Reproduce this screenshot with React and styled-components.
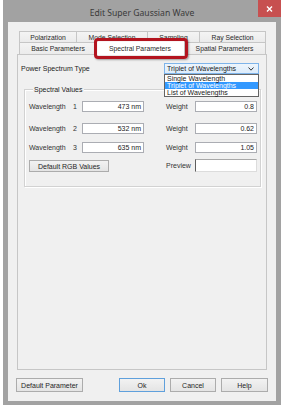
import React from 'react';
import styled, { createGlobalStyle } from 'styled-components';

const GlobalStyle = createGlobalStyle`
  html, body { margin: 0; padding: 0; background: #ffffff; }
  body { font-family: "Liberation Sans", Arial, sans-serif; color: #222; }
  * { box-sizing: border-box; }
`;

const Page = styled.div`
  width: 285px;
  height: 410px;
  padding-left: 3px;
`;

const Window = styled.div`
  width: 278px;
  height: 405px;
  background: #a2a2a2;
  padding: 0 5px 4px 5px;
  display: flex;
  flex-direction: column;
`;

const TitleBar = styled.div`
  height: 22px;
  margin: 0 -5px;
  display: grid;
  grid-template-columns: 23px 1fr 23px;
  align-items: start;
`;

const Title = styled.div`
  grid-column: 2;
  text-align: center;
  padding-top: 8px;
  font-family: "Noto Sans", "Liberation Sans", sans-serif;
  font-size: 8.6px;
  line-height: 10px;
  color: #3a3a3a;
`;

const CloseButton = styled.div`
  grid-column: 3;
  height: 17px;
  background: #c75050;
  display: flex;
  align-items: center;
  justify-content: center;
`;

const Client = styled.div`
  flex: 1;
  background: #f0f0f0;
  padding: 9px 9px 9px 9px;
  display: flex;
  flex-direction: column;
`;

const TabStrip = styled.div`
  position: relative;
  z-index: 1;
  padding: 0 1px 0 2px;
  display: flex;
  flex-direction: column;
`;

const TabRow = styled.div`
  display: flex;
  height: ${p => p.$h}px;
`;

const Tab = styled.div`
  flex: none;
  width: ${p => p.$w}px;
  height: 100%;
  border: 1px solid #c6c6c6;
  border-bottom: none;
  background: linear-gradient(#f4f4f4, #ebebeb);
  font-size: 6.8px;
  display: flex;
  align-items: center;
  justify-content: center;
  white-space: nowrap;
  color: #2a2a2a;
  & + & { border-left: none; }
`;

const ActiveTab = styled.div`
  flex: none;
  position: relative;
  width: ${p => p.$w + 4}px;
  height: 15px;
  margin: -2px -2px 0 -2px;
  border: 1px solid #c6c6c6;
  border-bottom: none;
  background: #ffffff;
  font-size: 6.8px;
  display: flex;
  align-items: center;
  justify-content: center;
  white-space: nowrap;
  color: #2a2a2a;
  z-index: 2;
  &::after {
    content: "";
    position: absolute;
    left: -2px;
    right: -4px;
    top: -3px;
    bottom: -4px;
    border: 3px solid #b3141f;
    border-radius: 4px;
    box-shadow: 1px 1px 2px rgba(0, 0, 0, 0.35), inset 0 0 1px rgba(120, 0, 0, 0.4);
  }
`;

const Panel = styled.div`
  height: 316px;
  border: 1px solid #c6c6c6;
  background: #f0f0f0;
  padding-top: 8px;
  display: flex;
  flex-direction: column;
`;

const HeaderRow = styled.div`
  height: 11px;
  padding: 0 7px 0 3px;
  display: flex;
  align-items: center;
  justify-content: space-between;
  font-size: 7px;
`;

const Combo = styled.div`
  position: relative;
  width: 95px;
  height: 11px;
  border: 1px solid #7eb4ea;
  background: linear-gradient(#edf5fc, #dcecfc);
  padding: 0 4px 0 2px;
  display: flex;
  align-items: center;
  justify-content: space-between;
  font-size: 7px;
  color: #1a1a1a;
`;

const DropList = styled.div`
  position: absolute;
  left: -1px;
  top: calc(100% + 1px);
  width: 95px;
  border: 1px solid #646464;
  background: #ffffff;
  z-index: 5;
`;

const DropItem = styled.div`
  height: 7px;
  line-height: 7px;
  padding-left: 2px;
  font-size: 7px;
  white-space: nowrap;
  background: ${p => (p.$selected ? '#3399ff' : '#ffffff')};
  color: ${p => (p.$selected ? '#ffffff' : '#1a1a1a')};
`;

const GroupBox = styled.div`
  margin: 15px 5px 0 6px;
  border: 1px solid #d2d2d2;
  box-shadow: 1px 1px 0 #ffffff, inset 1px 1px 0 #ffffff;
  padding: 0 0 14px 4px;
`;

const Legend = styled.div`
  width: fit-content;
  margin: -5px 0 0 4px;
  padding: 0 1px;
  height: 9px;
  line-height: 9px;
  font-size: 7px;
  background: #f0f0f0;
`;

const FieldRow = styled.div`
  display: grid;
  grid-template-columns: 44px 9px 62px 22px 29px 62px;
  align-items: center;
  height: ${p => p.$h || 11}px;
  margin-top: ${p => p.$top}px;
  font-size: 7px;
  color: #333;
`;

const Label = styled.span`
  grid-column: ${p => p.$col};
  white-space: nowrap;
`;

const TextBox = styled.div`
  grid-column: ${p => p.$col};
  height: 11px;
  border: 1px solid #abadb3;
  background: #ffffff;
  text-align: right;
  padding-right: 2px;
  line-height: 9px;
  font-size: 7px;
  color: #1a1a1a;
`;

const PreviewBox = styled.div`
  grid-column: 6;
  height: 13px;
  background: #ffffff;
  border: 1px solid #dcdcdc;
  border-left-color: #5f5f5f;
  border-top-color: #a8a8a8;
`;

const Button = styled.div`
  width: ${p => p.$w}px;
  height: ${p => p.$h || 14}px;
  border: 1px solid ${p => (p.$default ? '#5fa0dc' : '#acacac')};
  background: linear-gradient(#f2f2f2, #e4e4e4);
  font-size: 7px;
  color: #1f1f1f;
  display: flex;
  align-items: center;
  justify-content: center;
  white-space: nowrap;
`;

const RgbButton = styled(Button)`
  grid-column: 1 / 4;
  align-self: end;
`;

const ButtonRow = styled.div`
  margin: 8px -1px 0 -1px;
  height: 14px;
  display: flex;
  gap: 5px;
`;

const Spacer = styled.div`
  flex: 1;
`;

const rows = [
  { n: 1, wl: '473 nm', w: '0.8', top: 7 },
  { n: 2, wl: '532 nm', w: '0.62', top: 11 },
  { n: 3, wl: '635 nm', w: '1.05', top: 8 },
];

export default function App() {
  return (
    <>
      <GlobalStyle />
      <Page>
        <Window>
          <TitleBar>
            <Title>Edit Super Gaussian Wave</Title>
            <CloseButton>
              <svg width="7" height="6" viewBox="0 0 7 6">
                <path d="M1 0.5 L6 5.5 M6 0.5 L1 5.5" stroke="#ffffff" strokeWidth="1.4" />
              </svg>
            </CloseButton>
          </TitleBar>
          <Client>
            <TabStrip>
              <TabRow $h={11}>
                <Tab $w={58}>Polarization</Tab>
                <Tab $w={71}>Mode Selection</Tab>
                <Tab $w={52}>Sampling</Tab>
                <Tab $w={66}>Ray Selection</Tab>
              </TabRow>
              <TabRow $h={12}>
                <Tab $w={78}>Basic Parameters</Tab>
                <ActiveTab $w={86}>Spectral Parameters</ActiveTab>
                <Tab $w={83}>Spatial Parameters</Tab>
              </TabRow>
            </TabStrip>
            <Panel>
              <HeaderRow>
                <span>Power Spectrum Type</span>
                <Combo>
                  <span>Triplet of Wavelengths</span>
                  <svg width="6" height="4" viewBox="0 0 6 4">
                    <polyline points="0.5,0.5 3,3.2 5.5,0.5" fill="none" stroke="#333" strokeWidth="1" />
                  </svg>
                  <DropList>
                    <DropItem>Single Wavelength</DropItem>
                    <DropItem $selected>Triplet of Wavelengths</DropItem>
                    <DropItem>List of Wavelengths</DropItem>
                  </DropList>
                </Combo>
              </HeaderRow>
              <GroupBox>
                <Legend>Spectral Values</Legend>
                {rows.map(r => (
                  <FieldRow key={r.n} $top={r.top}>
                    <Label $col={1}>Wavelength</Label>
                    <Label $col={2}>{r.n}</Label>
                    <TextBox $col={3}>{r.wl}</TextBox>
                    <Label $col={5}>Weight</Label>
                    <TextBox $col={6}>{r.w}</TextBox>
                  </FieldRow>
                ))}
                <FieldRow $top={6} $h={13}>
                  <RgbButton $w={80} $h={12}>Default RGB Values</RgbButton>
                  <Label $col={5}>Preview</Label>
                  <PreviewBox />
                </FieldRow>
              </GroupBox>
            </Panel>
            <ButtonRow>
              <Button $w={67}>Default Parameter</Button>
              <Spacer />
              <Button $w={46} $default>Ok</Button>
              <Button $w={46}>Cancel</Button>
              <Button $w={47}>Help</Button>
            </ButtonRow>
          </Client>
        </Window>
      </Page>
    </>
  );
}
